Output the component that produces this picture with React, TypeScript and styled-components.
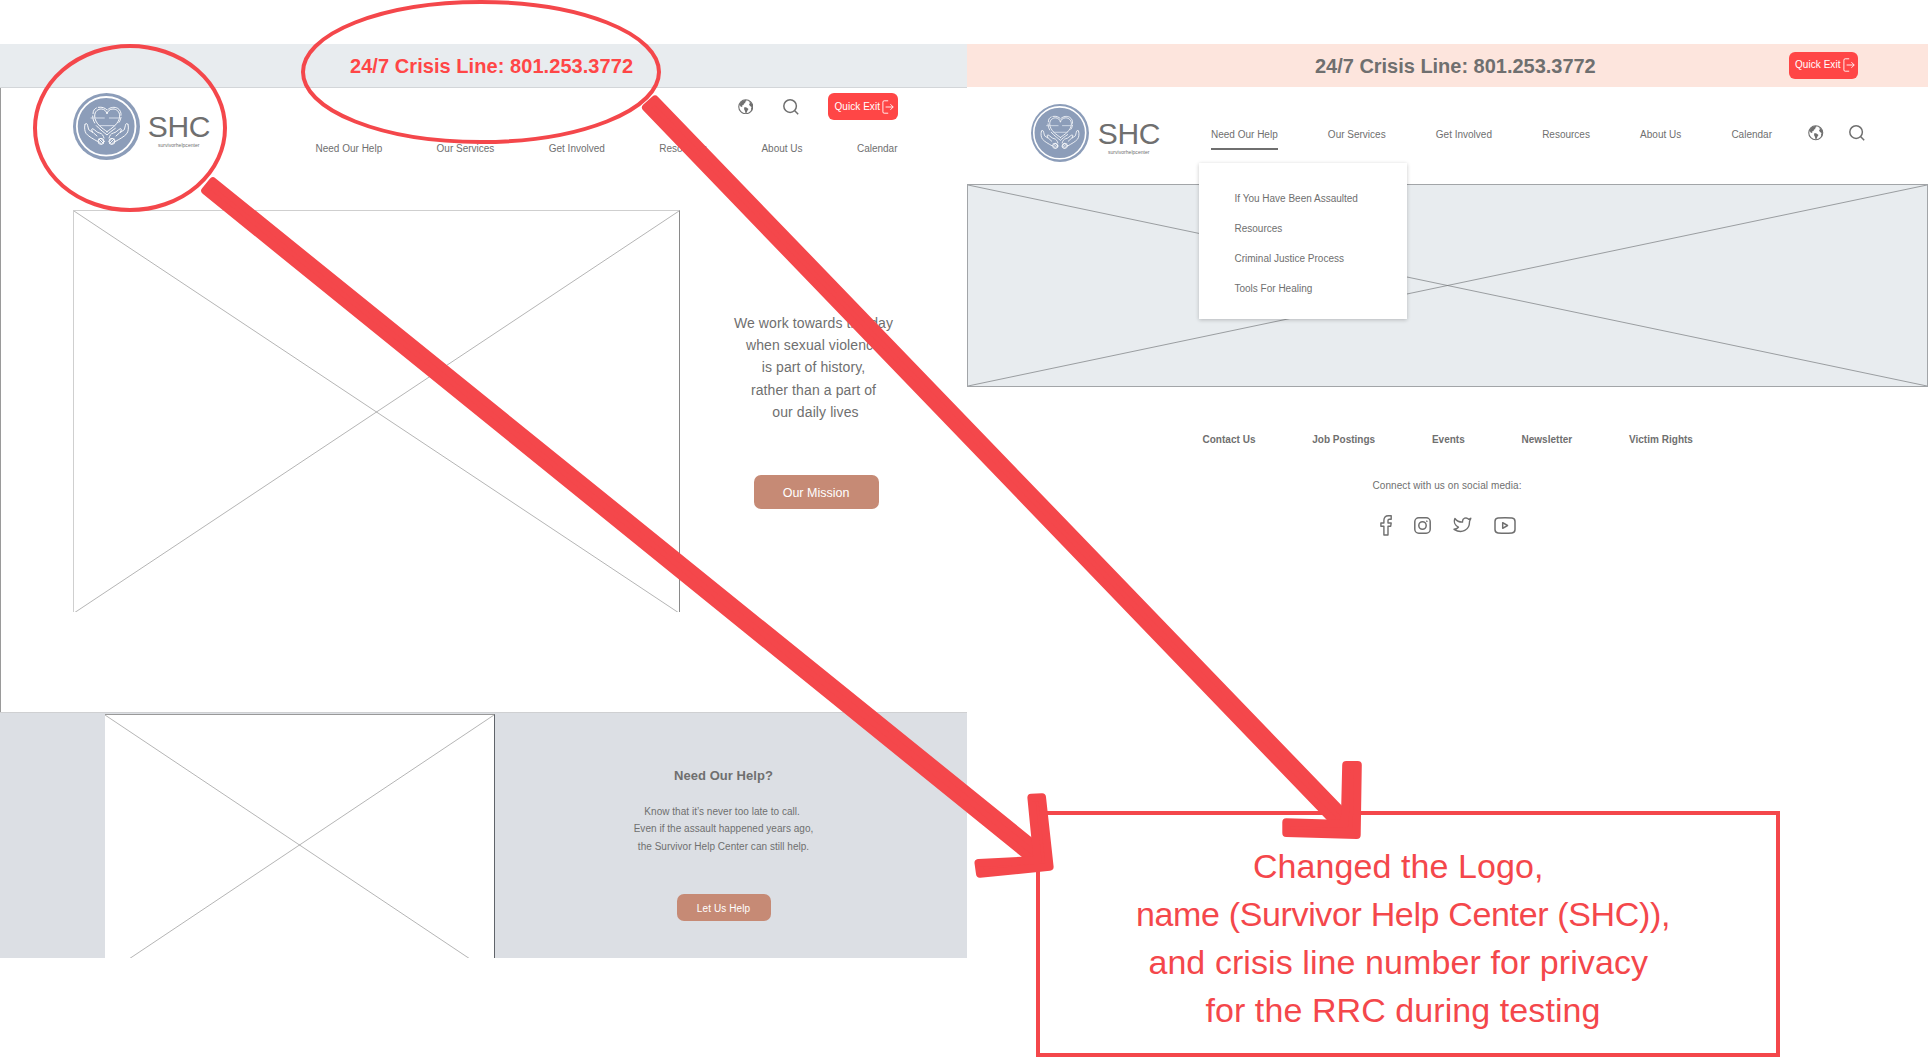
import React from "react";
import styled, { createGlobalStyle, css } from "styled-components";

const ink = "#6f6f6f";
const alert = "#ff4646";
const marker = "#f4474b";
const clay = "#c68a75";
const mist = "#e8ecef";

const GlobalStyle = createGlobalStyle`
  *, *::before, *::after { box-sizing: border-box; }
  body {
    margin: 0;
    background: #fff;
    color: ${ink};
    font-family: "Liberation Sans", Arial, Helvetica, sans-serif;
    font-size: 10px;
    line-height: 12px;
  }
`;

const Board = styled.div`
  position: relative;
  display: grid;
  grid-template-columns: 967px 961px;
  width: 1928px;
  height: 1057px;
  padding-top: 44px;
  overflow: hidden;
`;

const Screen = styled.div`
  display: flex;
  flex-direction: column;
  min-width: 0;
`;

const CrisisBar = styled.div<{ $tone: "plain" | "warm" }>`
  display: flex;
  align-items: center;
  flex: none;
  font-weight: 700;
  font-size: 20px;
  line-height: 24px;
  white-space: nowrap;
  ${({ $tone }) =>
    $tone === "plain"
      ? css`
          height: 44px;
          padding: 0 0 0 350px;
          background: ${mist};
          border-bottom: 1px solid #d3d6d9;
          color: ${alert};
          letter-spacing: 0.06px;
        `
      : css`
          height: 42.5px;
          padding: 0 70px 0 348px;
          justify-content: space-between;
          background: #fde5dd;
        `}
`;

const CrisisText = styled.span`
  padding-top: 2px;
  letter-spacing: -0.02px;
`;

const ExitButton = styled.button`
  display: flex;
  align-items: center;
  justify-content: space-between;
  width: 69.5px;
  height: 27px;
  padding: 0 3.5px 0 6.5px;
  border: 0;
  border-radius: 6px;
  background: ${alert};
  color: #fff;
  font: 400 10px/12px "Liberation Sans", Arial, sans-serif;
  letter-spacing: 0.05px;
  white-space: nowrap;
`;

const HomeBody = styled.div`
  height: 624px;
  border-left: 1px solid #9a9a9a;
  padding: 5px 69.5px 0 72px;
`;

const HomeHeader = styled.header`
  display: flex;
  justify-content: space-between;
  height: 117px;
`;

const HomeTools = styled.div`
  display: flex;
  flex-direction: column;
  width: 582px;
`;

const ToolRow = styled.div`
  display: flex;
  align-items: center;
  justify-content: flex-end;
  height: 27px;
`;

const IconSlot = styled.span<{ $gap: number }>`
  display: flex;
  margin-right: ${({ $gap }) => $gap}px;
`;

const Nav = styled.nav<{ $top: number }>`
  display: flex;
  justify-content: space-between;
  margin-top: ${({ $top }) => $top}px;
  white-space: nowrap;
`;

const Brand = styled.div<{ $gap: number }>`
  display: flex;
  align-items: flex-start;
  gap: ${({ $gap }) => $gap}px;
`;

const BrandText = styled.div<{ $top: number }>`
  display: flex;
  flex-direction: column;
  align-items: flex-end;
  width: 62px;
  padding-top: ${({ $top }) => $top}px;
`;

const BrandName = styled.div`
  font-size: 30px;
  line-height: 30px;
  letter-spacing: -0.4px;
  white-space: nowrap;
`;

const BrandTag = styled.div`
  padding-right: 10.5px;
  font-size: 5px;
  line-height: 6px;
  letter-spacing: 0.04px;
`;

const Hero = styled.section`
  display: flex;
  align-items: flex-start;
`;

const Placeholder = styled.div<{ $w: number; $h: number; $kind: "hero" | "help" | "banner" }>`
  flex: none;
  width: ${({ $w }) => $w}px;
  height: ${({ $h }) => $h}px;
  overflow: hidden;
  ${({ $kind }) =>
    $kind === "hero" &&
    css`
      border: solid #cfcfcf;
      border-width: 1px 1px 0 1px;
      border-right-color: #8a8a8a;
    `}
  ${({ $kind }) =>
    $kind === "help" &&
    css`
      background: #fff;
      border-top: 1px solid #999;
      border-right: 1px solid #60646a;
    `}
  ${({ $kind }) =>
    $kind === "banner" &&
    css`
      background: ${mist};
      border: 1px solid #a2a5a8;
    `}
  svg { display: block; }
`;

const HeroCopy = styled.div`
  display: flex;
  flex-direction: column;
  flex: none;
  align-items: center;
  width: 267px;
  padding: 102px 0 0 0;
`;

const HeroText = styled.p`
  margin: 0;
  font-size: 14px;
  line-height: 22.2px;
  letter-spacing: 0.1px;
  text-align: center;
  white-space: pre;
`;

const ActionButton = styled.button<{ $size: "large" | "small" }>`
  border: 0;
  border-radius: 7px;
  background: ${clay};
  color: #fff;
  font-family: "Liberation Sans", Arial, sans-serif;
  ${({ $size }) =>
    $size === "large"
      ? css`
          width: 125px;
          height: 34px;
          margin: 52px 0 0 5px;
          padding: 1px 0 0;
          font-size: 12.5px;
        `
      : css`
          width: 94px;
          height: 27px;
          margin-top: 38.5px;
          padding: 1px 0 0;
          font-size: 10px;
          letter-spacing: 0.1px;
        `}
`;

const HelpSection = styled.section`
  display: flex;
  height: 246px;
  padding: 1px 0 0 105px;
  border-top: 1px solid #cfd0d2;
  background: #dcdfe4;
  overflow: hidden;
`;

const HelpCopy = styled.div`
  display: flex;
  flex-direction: column;
  align-items: center;
  width: 457px;
  padding-top: 54px;
`;

const HelpTitle = styled.h2`
  margin: 0;
  font-size: 13px;
  line-height: 16px;
  letter-spacing: 0.05px;
`;

const HelpText = styled.p`
  margin: 18.5px 0 0;
  line-height: 17.8px;
  letter-spacing: 0.03px;
  text-align: center;
  white-space: pre;
`;

const SiteHeader = styled.header`
  position: relative;
  display: flex;
  height: 97.5px;
  padding: 17.5px 63px 0 64px;
`;

const SiteNav = styled.nav`
  display: flex;
  justify-content: space-between;
  width: 561px;
  margin: 25px 36px 0 51px;
  white-space: nowrap;
`;

const NavItem = styled.span<{ $active?: boolean }>`
  height: 21px;
  border-bottom: ${({ $active }) => ($active ? `2px solid ${ink}` : "0")};
`;

const HeaderIcons = styled.div`
  display: flex;
  align-items: flex-start;
  gap: 25px;
  padding-top: 21px;
`;

const Dropdown = styled.div`
  position: absolute;
  left: 232px;
  top: 76.5px;
  z-index: 1;
  display: flex;
  flex-direction: column;
  gap: 18px;
  width: 207.5px;
  height: 156px;
  padding: 30px 0 0 35.5px;
  background: #fff;
  box-shadow: 0 1px 4px rgba(0, 0, 0, 0.22);
  white-space: nowrap;
`;

const FooterLinks = styled.div`
  display: flex;
  justify-content: space-between;
  margin: 47px 235px 0 235.5px;
  font-weight: 700;
  letter-spacing: 0.02px;
  white-space: nowrap;
`;

const Connect = styled.div`
  margin: 34px 0 0;
  letter-spacing: 0.09px;
  text-align: center;
  text-indent: -1px;
`;

const SocialRow = styled.div`
  display: flex;
  align-items: center;
  gap: 22px;
  height: 22px;
  margin: 22px 0 0 413px;
`;

const Callout = styled.div`
  flex: none;
  width: 744px;
  height: 246px;
  margin: 275px 0 0 69px;
  padding: 27px 10px 0 0;
  border: 4px solid ${marker};
  color: ${marker};
  font-size: 34px;
  line-height: 48.1px;
  letter-spacing: 0.1px;
  text-align: center;
  white-space: pre;
`;

const CalloutLine = styled.div<{ $tight?: boolean }>`
  letter-spacing: ${({ $tight }) => ($tight ? "-0.35px" : "0.08px")};
`;

const Markup = styled.svg`
  position: absolute;
  inset: 0;
  z-index: 2;
  pointer-events: none;
`;

const Cross = ({ w, h, stroke }: { w: number; h: number; stroke: string }) => (
  <svg width={w} height={h} viewBox={`0 0 ${w} ${h}`} stroke={stroke} strokeWidth="0.65">
    <path d={`M0 0L${w} ${h}M${w} 0L0 ${h}`} />
  </svg>
);

const LogoMark = ({ size, ring }: { size: number; ring: number }) => (
  <svg width={size} height={size} viewBox="0 0 201 201" fill="none" stroke="#fff" strokeLinecap="round" strokeLinejoin="round">
    <circle cx="100.5" cy="100.5" r="100.5" fill="#8c9db9" stroke="none" />
    <circle cx="99.5" cy="100" r={ring} strokeWidth="5.5" />
    <g strokeWidth="2.8">
      <path d="M102 116C88 106 65 91 65 69C65 54 76 48 85 48C94 48 100 54 102 63C104 54 110 48 120 48C130 48 140 55 140 69C140 91 116 106 102 116Z" />
      <path d="M60 62C60 52 65 47 70 45M76 43C88 41 96 45 101 50M104 50C112 42 125 41 134 46C142 51 145 59 144 67M144 73C142 82 140 86 138 88M59 69C59 78 62 85 65 90M70 98C82 111 94 119 102 126C108 120 118 112 127 106" />
      <path d="M54 75H94M109 75H139M78 98H126" stroke="#dbe2ee" />
      <path d="M36 94C40 90 43 91 44 98L47 110L60 119C56 112 54 108 59 107C66 110 73 120 80 120C88 122 91 128 93 135M36 94C33 106 36 116 39 121C48 132 60 137 73 145M62 120L72 129" />
      <path d="M165 94C161 90 158 91 157 98L154 110L141 119C145 112 147 108 142 107C135 110 128 120 121 120C113 122 110 128 108 135M165 94C168 106 165 116 162 121C153 132 141 137 128 145M139 120L129 129" />
      <circle cx="84" cy="145" r="9" />
      <circle cx="117" cy="145" r="9" />
      <path d="M78 138L91 151M84 136L93 146M76 144L86 154M123 138L110 151M117 136L108 146M125 144L115 154" />
    </g>
  </svg>
);

const GlobeIcon = () => (
  <svg width="15.5" height="15.5" viewBox="0 0 31 31">
    <circle cx="15.5" cy="15.5" r="14" fill="none" stroke={ink} strokeWidth="2.2" />
    <path
      fill={ink}
      d="M16 2L17 4L14 6L15 8L12 9L11 12L8 13L9 15L6 16L4 13L3 11C5 6 10 2 16 2ZM13 16L17 17L21 20L19 23L17 28L15 29L14 24L12 20ZM21 4C26 6 30 11 29.500 17L27 23L26 20L27 16L24 14L22 11L24 8Z"
    />
  </svg>
);

const SearchIcon = () => (
  <svg width="16" height="16" viewBox="0 0 16 16" fill="none" stroke={ink} strokeWidth="1.5">
    <circle cx="7.100" cy="7.100" r="6.300" />
    <path d="M11.500 11.500L15.200 15.200" />
  </svg>
);

const ExitIcon = () => (
  <svg width="12" height="14" viewBox="0 0 12 14" fill="none" stroke="#fff" strokeWidth="0.9">
    <path d="M6.200 0.800H2.200Q0.900 0.800 0.900 2.100V11.900Q0.900 13.200 2.200 13.200H6.200M3.600 7H11.200M8.400 4.200L11.200 7L8.400 9.800" />
  </svg>
);

const Logo = ({ size, ring, gap, top }: { size: number; ring: number; gap: number; top: number }) => (
  <Brand $gap={gap}>
    <LogoMark size={size} ring={ring} />
    <BrandText $top={top}>
      <BrandName>SHC</BrandName>
      <BrandTag>survivorhelpcenter</BrandTag>
    </BrandText>
  </Brand>
);

const QuickExit = () => (
  <ExitButton>
    Quick Exit
    <ExitIcon />
  </ExitButton>
);

const SocialIcons = () => (
  <>
    <svg width="12" height="21" viewBox="0 0 12 21" fill="none" stroke={ink} strokeWidth="1.4" strokeLinejoin="round">
      <path d="M11.200 0.800V4.300H9.300Q8 4.300 8 5.600V8H11.200L10.700 11.200H8V20H3.900V11.200H0.900V8H3.900V5.300Q3.900 0.800 8.400 0.800Z" />
    </svg>
    <svg width="17" height="17" viewBox="0 0 17 17" fill="none" stroke={ink} strokeWidth="1.5">
      <rect x="0.800" y="0.800" width="15.400" height="15.400" rx="4" />
      <circle cx="8.500" cy="8.500" r="3.700" />
      <path d="M12.300 4.700L13.400 3.900" />
    </svg>
    <svg width="19" height="16" viewBox="0 0 19 16" fill="none" stroke={ink} strokeWidth="1.4" strokeLinejoin="round">
      <path d="M17.800 1.200C17 1.800 16.500 2 15.700 2.200C13.400 -0.200 9.200 1 9.500 5.100C6.300 5.200 3.600 3.700 1.900 1.500C0.500 5 2 8.500 5.400 10.200C4.200 11.600 2.700 12.200 1 12.300C9 17.300 16.600 12.800 16.500 4.800C16.500 3.800 17.600 2.500 17.800 1.200Z" />
    </svg>
    <svg width="22" height="17" viewBox="0 0 22 17" fill="none" stroke={ink} strokeWidth="1.5" strokeLinejoin="round">
      <path d="M4 1.100Q11 0.400 18 1.100Q21 1.400 21 4.500V12.500Q21 15.600 18 15.900Q11 16.600 4 15.900Q1 15.600 1 12.500V4.500Q1 1.400 4 1.100ZM8.700 5.700V11.300L13.500 8.500Z" />
    </svg>
  </>
);

const menu = ["Need Our Help", "Our Services", "Get Involved", "Resources", "About Us", "Calendar"];
const submenu = ["If You Have Been Assaulted", "Resources", "Criminal Justice Process", "Tools For Healing"];
const footer = ["Contact Us", "Job Postings", "Events", "Newsletter", "Victim Rights"];

const Annotations = () => (
  <Markup width="1928" height="1057" viewBox="0 0 1928 1057" fill="none" stroke={marker}>
    <ellipse cx="130" cy="128" rx="95" ry="82" strokeWidth="4" />
    <ellipse cx="481" cy="72" rx="178" ry="70" strokeWidth="4" />
    <g fill={marker} strokeWidth="8" strokeLinejoin="round">
      <path d="M212.900 181.300L205.200 190.700L1037 864L1046 854Z" />
      <path d="M1031.400 797.800L1042 797.200L1049.600 866.800L980 873.700L978.500 863L1037.500 860Z" />
      <path d="M655 99.500L646 107.500L1345 833L1354 824Z" />
      <path d="M1346.200 765L1357.800 765L1356.700 834.900L1286.300 833L1286.300 822.200L1344.800 824Z" />
    </g>
  </Markup>
);

export default function App() {
  return (
    <>
      <GlobalStyle />
      <Board>
        <Screen>
          <CrisisBar $tone="plain">24/7 Crisis Line: 801.253.3772</CrisisBar>
          <HomeBody>
            <HomeHeader>
              <Logo size={67} ring={88} gap={8} top={19} />
              <HomeTools>
                <ToolRow>
                  <IconSlot $gap={29.5}><GlobeIcon /></IconSlot>
                  <IconSlot $gap={29.5}><SearchIcon /></IconSlot>
                  <QuickExit />
                </ToolRow>
                <Nav $top={23}>
                  {menu.map((m) => <span key={m}>{m}</span>)}
                </Nav>
              </HomeTools>
            </HomeHeader>
            <Hero>
              <Placeholder $w={607} $h={402} $kind="hero">
                <Cross w={605} h={402} stroke="#8c8c8c" />
              </Placeholder>
              <HeroCopy>
                <HeroText>{"We work towards the day\nwhen sexual violence\nis part of history,\nrather than a part of\n our daily lives"}</HeroText>
                <ActionButton $size="large">Our Mission</ActionButton>
              </HeroCopy>
            </Hero>
          </HomeBody>
          <HelpSection>
            <Placeholder $w={390} $h={262} $kind="help">
              <Cross w={389} h={260} stroke="#8c8c8c" />
            </Placeholder>
            <HelpCopy>
              <HelpTitle>Need Our Help?</HelpTitle>
              <HelpText>{"Know that it’s never too late to call. \nEven if the assault happened years ago,\nthe Survivor Help Center can still help."}</HelpText>
              <ActionButton $size="small">Let Us Help</ActionButton>
            </HelpCopy>
          </HelpSection>
        </Screen>
        <Screen>
          <CrisisBar $tone="warm">
            <CrisisText>24/7 Crisis Line: 801.253.3772</CrisisText>
            <QuickExit />
          </CrisisBar>
          <SiteHeader>
            <Logo size={58} ring={90} gap={9} top={15} />
            <SiteNav>
              {menu.map((m, i) => <NavItem key={m} $active={i === 0}>{m}</NavItem>)}
            </SiteNav>
            <HeaderIcons>
              <GlobeIcon />
              <SearchIcon />
            </HeaderIcons>
            <Dropdown>
              {submenu.map((m) => <span key={m}>{m}</span>)}
            </Dropdown>
          </SiteHeader>
          <Placeholder $w={961} $h={203} $kind="banner">
            <Cross w={959} h={201} stroke="#707376" />
          </Placeholder>
          <FooterLinks>
            {footer.map((m) => <span key={m}>{m}</span>)}
          </FooterLinks>
          <Connect>Connect with us on social media:</Connect>
          <SocialRow>
            <SocialIcons />
          </SocialRow>
          <Callout>
            <CalloutLine>{"Changed the Logo, "}</CalloutLine>
            <CalloutLine $tight>{"name (Survivor Help Center (SHC)),"}</CalloutLine>
            <CalloutLine>{"and crisis line number for privacy "}</CalloutLine>
            <CalloutLine>{"for the RRC during testing"}</CalloutLine>
          </Callout>
        </Screen>
        <Annotations />
      </Board>
    </>
  );
}
